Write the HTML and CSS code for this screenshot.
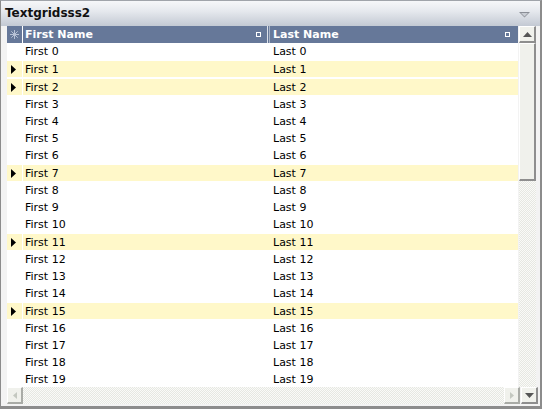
FILE: index.html
```html
<!DOCTYPE html>
<html>
<head>
<meta charset="utf-8">
<link rel="stylesheet" href="styles.css">
</head>
<body>
<div class="window">
  <div class="titlebar">
    <span class="title">Textgridsss2</span>
    <svg class="menu-arrow" width="11" height="6" viewBox="0 0 11 6"><path d="M0 0H11L5.5 5.5Z" fill="#8a8e96"/><path d="M2 1H9L5.5 4.5Z" fill="#c9cdd4"/></svg>
  </div>
  <div class="body">
    <div class="grid">
      <div class="main">
        <div class="header">
          <div class="hcell ind">
            <svg width="9" height="9" viewBox="0 0 9 9"><g stroke="#b8c2d6" stroke-width="1"><path d="M4.5 0V9M0 4.5H9M1.3 1.3L7.7 7.7M7.7 1.3L1.3 7.7"/></g></svg>
          </div>
          <div class="hcell c1"><span>First Name</span><i class="sq"></i></div>
          <div class="hsep"></div>
          <div class="hcell c2"><span>Last Name</span><i class="sq"></i></div>
        </div>
        <div class="rows" id="rows"></div>
      </div>
      <div class="vscroll">
        <div class="sbtn up"><svg width="9" height="5" viewBox="0 0 9 5"><path d="M0 5H9L4.5 0Z" fill="#555"/></svg></div>
        <div class="thumb"></div>
        <div class="track"></div>
      </div>
    </div>
    <div class="hbar">
      <div class="sbtn left"><svg width="4" height="7" viewBox="0 0 4 7"><path d="M4 0V7L0 3.5Z" fill="#c4c8c0"/></svg></div>
      <div class="htrack"></div>
      <div class="sbtn right"><svg width="4" height="7" viewBox="0 0 4 7"><path d="M0 0V7L4 3.5Z" fill="#c4c8c0"/></svg></div>
      <div class="sbtn down"><svg width="9" height="5" viewBox="0 0 9 5"><path d="M0 0H9L4.5 5Z" fill="#555"/></svg></div>
    </div>
  </div>
</div>
<script>
  var hl = [1,2,7,11,15];
  var rows = document.getElementById('rows');
  var html = '';
  for (var i = 0; i < 20; i++) {
    var h = hl.indexOf(i) >= 0;
    html += '<div class="row' + (h ? ' hl' : '') + '"><div class="cell ind">' +
      (h ? '<svg width="5" height="9" viewBox="0 0 5 9"><path d="M0 0V9L5 4.5Z" fill="#000"/></svg>' : '') +
      '</div><div class="cell c1">First ' + i + '</div><div class="cell c2">Last ' + i + '</div></div>';
  }
  rows.innerHTML = html;
</script>
</body>
</html>
```

FILE: styles.css
```css
html, body {
  margin: 0;
  padding: 0;
  background: #fff;
}
.window {
  width: 542px;
  height: 409px;
  box-sizing: border-box;
  border-left: 1px solid #8c8c8c;
  border-right: 2px solid #8c8c8c;
  border-bottom: 3px solid #8c8c8c;
  border-top: 1px solid #a0a4aa;
  background: #f3f3f3;
  display: flex;
  flex-direction: column;
  font-family: "DejaVu Sans", Verdana, sans-serif;
  font-size: 11px;
  overflow: hidden;
}
.titlebar {
  height: 25px;
  flex: none;
  display: flex;
  align-items: center;
  justify-content: space-between;
  padding: 0 10px 0 4px;
  background: linear-gradient(#f6f7f9, #e6e9ee 40%, #c3c9d3);
}
.title {
  font-weight: bold;
  font-size: 12px;
  color: #111;
  margin-top: -1px;
}
.menu-arrow {
  margin-top: 3px;
}
.body {
  flex: 1;
  min-height: 0;
  display: flex;
  flex-direction: column;
  padding: 0 2px 2px 6px;
}
.grid {
  flex: 1;
  min-height: 0;
  display: flex;
}
.main {
  width: 511px;
  min-height: 0;
  display: flex;
  flex-direction: column;
  background: #fff;
  margin-right: 1px;
}
.header {
  height: 17px;
  flex: none;
  display: flex;
  background: #667899;
  color: #fff;
  font-weight: bold;
}
.hcell {
  display: flex;
  align-items: center;
  box-sizing: border-box;
}
.hcell.ind {
  width: 16px;
  justify-content: center;
  border-right: 1px solid #fff;
}
.hcell.c1 {
  width: 244px;
  padding-left: 2px;
  justify-content: space-between;
  padding-right: 6px;
}
.hsep {
  width: 3px;
  border-left: 1px solid #dde2ea;
  border-right: 1px solid #aab4c6;
  box-sizing: border-box;
  background: #667899;
}
.hcell.c2 {
  flex: 1;
  padding-left: 3px;
  justify-content: space-between;
  padding-right: 8px;
}
.sq {
  width: 3px;
  height: 3px;
  border: 1.5px solid #fff;
  display: block;
}
.rows {
  flex: 1;
  min-height: 0;
  overflow: hidden;
}
.row {
  height: 17px;
  display: flex;
  box-sizing: border-box;
  color: #000;
}
.row.hl {
  height: 18px;
  border-top: 1px solid #fff;
  border-bottom: 1px solid #fff;
}
.row.hl .cell {
  background: #fff8c9;
}
.cell {
  display: flex;
  align-items: center;
  box-sizing: border-box;
}
.cell.ind {
  width: 16px;
  border-right: 1px solid #fff;
  padding-left: 4px;
}
.cell.c1 {
  width: 247px;
  padding-left: 2px;
}
.cell.c2 {
  flex: 1;
  padding-left: 3px;
}
.vscroll {
  width: 17px;
  display: flex;
  flex-direction: column;
}
.sbtn {
  width: 17px;
  height: 17px;
  box-sizing: border-box;
  background: #f0f1ec;
  border-top: 1px solid #fff;
  border-left: 1px solid #fff;
  border-right: 2px solid #8e8e8e;
  border-bottom: 2px solid #8e8e8e;
  display: flex;
  align-items: center;
  justify-content: center;
  flex: none;
}
.thumb {
  height: 138px;
  flex: none;
  box-sizing: border-box;
  background: #f0f1ec;
  border-top: 1px solid #fff;
  border-left: 1px solid #fff;
  border-right: 2px solid #8e8e8e;
  border-bottom: 2px solid #8e8e8e;
}
.track, .htrack {
  flex: 1;
  background-color: #f4f4f2;
  background-image: repeating-conic-gradient(#e6e8e2 0 25%, #fafaf8 0 50%);
  background-size: 2px 2px;
}
.hbar {
  height: 17px;
  flex: none;
  display: flex;
}
.sbtn.left, .sbtn.right {
  width: 16px;
  border-right: 2px solid #a9aba6;
  border-bottom: 2px solid #a9aba6;
}
.sbtn.right {
  margin-right: 1px;
}
```
